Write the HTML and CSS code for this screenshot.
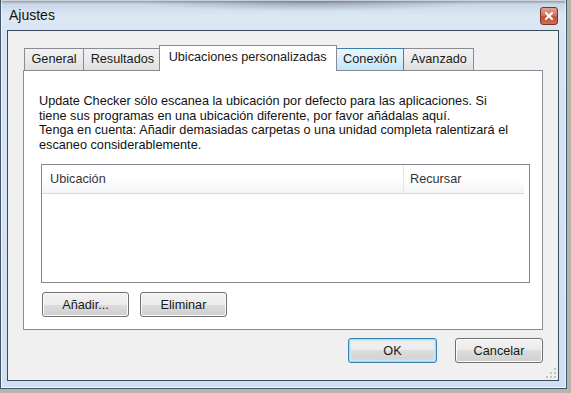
FILE: index.html
```html
<!DOCTYPE html>
<html lang="es">
<head>
    <meta charset="UTF-8">
    <meta name="viewport" content="width=device-width, initial-scale=1.0">
    <title>Ajustes</title>
    <link rel="stylesheet" href="styles.css">
</head>
<body>
    <div class="window">
        <div class="titlebar">
            <span class="title">Ajustes</span>
            <span class="close">
                <svg width="8" height="8" viewBox="0 0 8 8">
                    <path d="M1 1 L7 7 M7 1 L1 7" stroke="#fff" stroke-width="2" stroke-linecap="square"/>
                </svg>
            </span>
        </div>
        <div class="client">
            <div class="tabs">
                <div class="tab">General</div>
                <div class="tab">Resultados</div>
                <div class="tab active">Ubicaciones personalizadas</div>
                <div class="tab hover">Conexión</div>
                <div class="tab">Avanzado</div>
            </div>
            <div class="panel">
                <p class="info">Update Checker sólo escanea la ubicación por defecto para las aplicaciones. Si<br>
                tiene sus programas en una ubicación diferente, por favor añádalas aquí.<br>
                Tenga en cuenta: Añadir demasiadas carpetas o una unidad completa ralentizará el<br>
                escaneo considerablemente.</p>

                <div class="list">
                    <div class="list-header">
                        <div class="col col-loc">Ubicación</div>
                        <div class="col col-rec">Recursar</div>
                    </div>
                </div>

                <div class="panel-buttons">
                    <button class="btn">Añadir...</button>
                    <button class="btn">Eliminar</button>
                </div>
            </div>
            <div class="dialog-buttons">
                <button class="btn btn-ok">OK</button>
                <button class="btn btn-cancel">Cancelar</button>
            </div>
            <div class="grip">
                <svg width="10" height="10" viewBox="0 0 10 10">
                    <rect x="8" y="0" width="2" height="2" fill="#c4c4c4"/>
                    <rect x="4" y="4" width="2" height="2" fill="#c4c4c4"/>
                    <rect x="8" y="4" width="2" height="2" fill="#c4c4c4"/>
                    <rect x="0" y="8" width="2" height="2" fill="#c4c4c4"/>
                    <rect x="4" y="8" width="2" height="2" fill="#c4c4c4"/>
                    <rect x="8" y="8" width="2" height="2" fill="#c4c4c4"/>
                </svg>
            </div>
        </div>
    </div>
</body>
</html>
```

FILE: styles.css
```css
body {
    margin: 0;
    background-color: #b7b4a9;
    font-family: "Liberation Sans", Arial, sans-serif;
    font-size: 12.7px;
    color: #1a1a1a;
}
.window {
    box-sizing: border-box;
    width: 567px;
    height: 389px;
    padding: 0 7px 7px 6px;
    border: 1px solid #44556a;
    border-top: none;
    background:
        radial-gradient(ellipse 170px 9px at 310px 2px, rgba(70, 80, 95, 0.35), rgba(70, 80, 95, 0) 100%),
        linear-gradient(to bottom, #7d8996 0, #c9d7e6 4px, #dce8f4 16px, #d6e4f2 40px, #d1e0f0 100%);
    box-shadow: inset 0 0 0 1px rgba(255, 255, 255, 0.6);
}
.titlebar {
    height: 30px;
    display: flex;
    align-items: center;
    justify-content: space-between;
}
.title {
    padding-left: 2px;
    font-size: 14px;
    color: #111;
}
.close {
    display: flex;
    align-items: center;
    justify-content: center;
    width: 16px;
    height: 16px;
    margin-right: 1px;
    margin-top: 1px;
    border: 1px solid #7a3324;
    border-radius: 3px;
    background: linear-gradient(to bottom, #e3a291 0, #d27560 45%, #c0503a 55%, #cc6d55 100%);
}
.client {
    position: relative;
    box-sizing: border-box;
    height: 351px;
    padding: 0 15px;
    border: 1px solid #3b4a5c;
    background-color: #f0f0f0;
}
.tabs {
    display: flex;
    align-items: flex-end;
    height: 26px;
    margin-top: 14px;
    margin-bottom: -1px;
    padding-left: 1px;
    position: relative;
    z-index: 1;
}
.tab {
    box-sizing: border-box;
    height: 22px;
    margin-bottom: 1px;
    margin-right: -1px;
    padding: 3px 6.5px 0;
    border: 1px solid #898c95;
    border-bottom: none;
    background: linear-gradient(to bottom, #f2f2f2 0, #ebebeb 50%, #e0e0e0 100%);
    white-space: nowrap;
}
.tab.active {
    height: 26px;
    margin: 0 -1px 0 -2px;
    padding: 4px 9px 0;
    background: #fff;
    position: relative;
    z-index: 2;
}
.tab.hover {
    border-color: #3c7fb1;
    background: linear-gradient(to bottom, #eaf6fd 0, #d9f0fc 50%, #bee6fd 100%);
    position: relative;
    z-index: 1;
}
.panel {
    box-sizing: border-box;
    height: 260px;
    padding: 23px 12px 0 15px;
    border: 1px solid #898c95;
    background-color: #fff;
}
.info {
    margin: 0;
    line-height: 14.5px;
    color: #111;
}
.list {
    box-sizing: border-box;
    height: 119px;
    margin: 12px 0 0 2px;
    padding: 0 5px 0 0;
    border: 1px solid #828790;
    background-color: #fff;
}
.list-header {
    display: flex;
    height: 28px;
    border-bottom: 1px solid #d9dadc;
    background: linear-gradient(to bottom, #ffffff 0, #ffffff 50%, #f3f4f6 100%);
}
.col {
    display: flex;
    align-items: center;
    padding-left: 8px;
    color: #3b3333;
}
.col-loc {
    width: 353px;
    border-right: 1px solid #e4e6e9;
}
.col-rec {
    flex: 1;
    padding-left: 6px;
    color: #333;
}
.panel-buttons {
    display: flex;
    gap: 11px;
    margin-top: 9px;
    padding-left: 3px;
}
.btn {
    box-sizing: border-box;
    width: 87px;
    height: 25px;
    padding: 0;
    border: 1px solid #707070;
    border-radius: 3px;
    background: linear-gradient(to bottom, #f2f2f2 0, #ebebeb 50%, #dddddd 50%, #cfcfcf 100%);
    box-shadow: inset 0 0 0 1px #fbfbfb;
    font-family: "Liberation Sans", Arial, sans-serif;
    font-size: 12.7px;
    color: #1a1a1a;
}
.dialog-buttons {
    display: flex;
    justify-content: flex-end;
    gap: 18px;
    margin-top: 8px;
}
.btn-ok {
    width: 89px;
    border-color: #3c7fb1;
    box-shadow: inset 0 0 0 1px #9fdcf5, inset 0 0 2px 2px #c8ecfb;
}
.btn-cancel {
    width: 88px;
}
.grip {
    position: absolute;
    right: 2px;
    bottom: 2px;
    line-height: 0;
}
```
